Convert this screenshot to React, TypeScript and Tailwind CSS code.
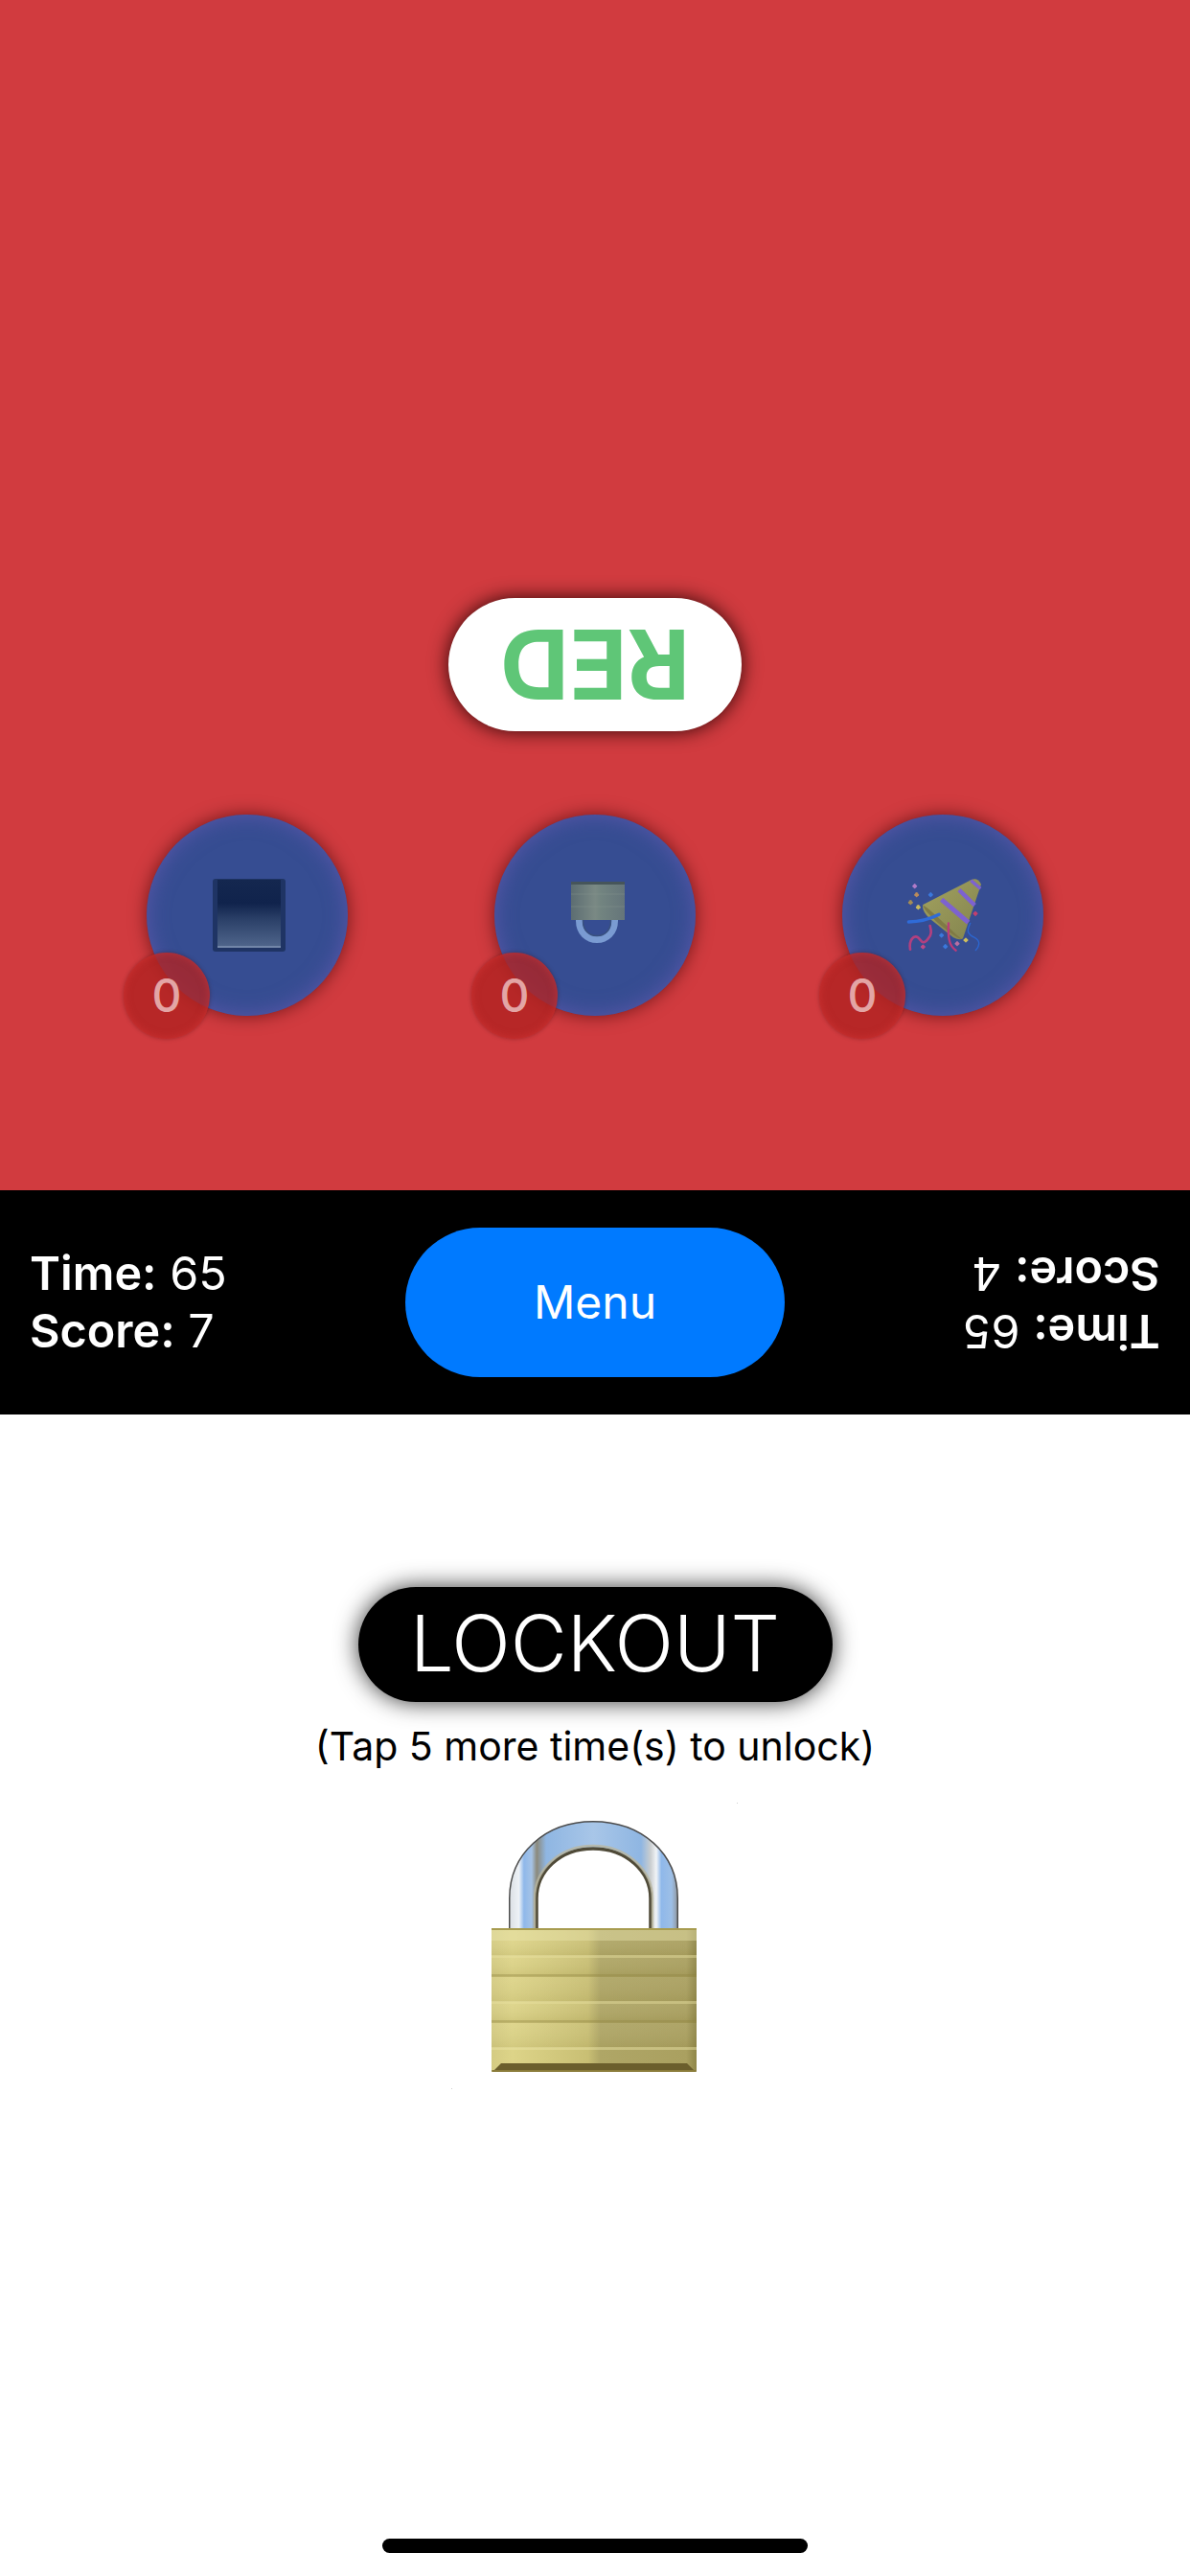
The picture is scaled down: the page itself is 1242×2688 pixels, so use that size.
import React from 'react';

const FONT = "font-['Inter','Liberation_Sans',sans-serif]";

// all three button icons sit in a 100x100 box centred on the circle
function SquareIcon() {
  return (
    <svg width="100" height="100" viewBox="0 0 100 100">
      <defs>
        <linearGradient id="sq" x1="0" y1="0" x2="0" y2="1">
          <stop offset="0" stopColor="#14274f" />
          <stop offset="0.35" stopColor="#10234c" />
          <stop offset="0.6" stopColor="#2c4169" />
          <stop offset="1" stopColor="#4f658b" />
        </linearGradient>
      </defs>
      <rect x="14" y="12" width="76" height="76" rx="3" fill="#1f3464" />
      <rect x="19" y="13" width="66" height="70" fill="url(#sq)" />
      <rect x="19" y="82" width="66" height="2" fill="#7286a8" />
    </svg>
  );
}

function SmallLock() {
  return (
    <svg width="100" height="100" viewBox="0 0 100 100">
      <defs>
        <linearGradient id="sl" x1="0" y1="0" x2="1" y2="0">
          <stop offset="0" stopColor="#5c6d72" />
          <stop offset="0.45" stopColor="#7a8984" />
          <stop offset="0.55" stopColor="#728480" />
          <stop offset="1" stopColor="#65757a" />
        </linearGradient>
      </defs>
      <path d="M33.5 52 V56 C33.5 68 42 75.5 52 75.5 C62 75.5 70.5 68 70.5 56 V52" fill="none" stroke="#7a9bd2" strokeWidth="7" />
      <path d="M37.5 52 V56 C37.5 66 44 71.5 52 71.5 C60 71.5 66.5 66 66.5 56 V52" fill="none" stroke="#39517f" strokeWidth="1.5" />
      <rect x="25" y="15" width="56" height="40" fill="url(#sl)" />
      <rect x="25" y="15" width="56" height="3" fill="#46555a" />
      <path d="M25 28h56M25 41h56" stroke="#8a9891" strokeWidth="1" opacity="0.4" />
    </svg>
  );
}

function PartyPopper() {
  const dots: [number, number, string][] = [
    [74, 74, '#b07bc8'],
    [80, 101, '#b98b5b'],
    [61, 125, '#a58d55'],
    [85, 140, '#c9bb5f'],
    [124, 101, '#3a78dc'],
    [264, 160, '#c3406e'],
    [158, 228, '#3a78dc'],
    [170, 263, '#3a78dc'],
    [207, 254, '#b96da2'],
    [234, 243, '#cebe5e'],
    [100, 264, '#bf4987'],
  ];
  return (
    <svg width="100" height="100" viewBox="12 15 300 300">
      <defs>
        <linearGradient id="pc" x1="0" y1="0" x2="1" y2="1">
          <stop offset="0" stopColor="#a3a25e" />
          <stop offset="1" stopColor="#82834f" />
        </linearGradient>
      </defs>
      <path d="M100 132 L250 55 Q270 45 282 68 L225 238 Q215 245 195 235 L120 175 Q95 150 100 132 Z" fill="url(#pc)" />
      <path d="M250 56 L280 82" stroke="#7d62d0" strokeWidth="10" />
      <path d="M213 86 L262 134" stroke="#7d62d0" strokeWidth="13" />
      <path d="M158 116 L242 188" stroke="#7d62d0" strokeWidth="15" />
      <path d="M100 135 C110 132 190 215 222 240 C205 240 110 165 100 135 Z" fill="#7f7a45" />
      <path d="M55 186 C85 186 120 178 150 163" fill="none" stroke="#2f6bd8" strokeWidth="10" strokeLinecap="round" />
      <path d="M60 272 C55 245 70 225 85 235 C95 245 100 260 115 240 C130 225 125 210 122 198" fill="none" stroke="#b2407f" strokeWidth="8" strokeLinecap="round" />
      <path d="M180 190 C178 230 180 260 203 275" fill="none" stroke="#ba3b7b" strokeWidth="7" strokeLinecap="round" />
      <path d="M248 190 C235 215 240 225 262 235 C280 245 278 260 265 275" fill="none" stroke="#2c66d0" strokeWidth="4" strokeLinecap="round" />
      {dots.map(([x, y, c]) => (
        <rect key={`${x}-${y}`} x={x - 6} y={y - 6} width="12" height="12" rx="2" fill={c} transform={`rotate(45 ${x} ${y})`} />
      ))}
    </svg>
  );
}

function BigLock() {
  const shackle = 'M75 135 V100 C75 62 105 34 148 34 C192 34 222 62 222 100 V135';
  return (
    <svg width="300" height="300" viewBox="0 0 300 300">
      <defs>
        <linearGradient id="sh" gradientUnits="userSpaceOnUse" x1="60" y1="0" x2="237" y2="0">
          <stop offset="0" stopColor="#d9dee3" />
          <stop offset="0.06" stopColor="#eef2f6" />
          <stop offset="0.09" stopColor="#8fb8ea" />
          <stop offset="0.135" stopColor="#a5c3e6" />
          <stop offset="0.165" stopColor="#8c8a7c" />
          <stop offset="0.22" stopColor="#8fb6e2" />
          <stop offset="0.5" stopColor="#a8c6e8" />
          <stop offset="0.78" stopColor="#8fb6e2" />
          <stop offset="0.835" stopColor="#c9cdcf" />
          <stop offset="0.87" stopColor="#f1f4f7" />
          <stop offset="0.9" stopColor="#8fb8ea" />
          <stop offset="0.96" stopColor="#9dbfe6" />
          <stop offset="1" stopColor="#8f9397" />
        </linearGradient>
        <linearGradient id="bd" x1="0" y1="0" x2="1" y2="0">
          <stop offset="0" stopColor="#d4cb82" />
          <stop offset="0.1" stopColor="#ddd488" />
          <stop offset="0.47" stopColor="#c9bf74" />
          <stop offset="0.53" stopColor="#afa666" />
          <stop offset="0.95" stopColor="#aaa060" />
          <stop offset="1" stopColor="#8f8648" />
        </linearGradient>
        <linearGradient id="band" x1="0" y1="0" x2="0" y2="1">
          <stop offset="0" stopColor="#fff" stopOpacity="0.05" />
          <stop offset="1" stopColor="#6f6428" stopOpacity="0.1" />
        </linearGradient>
      </defs>
      <path d={shackle} fill="none" stroke="#4c4c4c" strokeWidth="30" />
      <path d={shackle} fill="none" stroke="url(#sh)" strokeWidth="27" />
      <path d="M89 135 V100 C89 72 113 48 148 48 C183 48 208 72 208 100 V135" fill="none" stroke="#4f4a38" strokeWidth="3.5" />
      <path d="M87 135 V100 C87 70 113 45 148 45 C183 45 210 70 210 100 V135" fill="none" stroke="#b9b6a0" strokeWidth="2.5" opacity="0.8" />
      <rect x="42" y="131" width="214" height="150" rx="2" fill="url(#bd)" />
      <rect x="42" y="133" width="214" height="11" fill="#ece6b4" opacity="0.45" />
      <rect x="42" y="131" width="214" height="2" fill="#a89c50" />
      <rect x="42" y="144" width="214" height="16" fill="url(#band)" />
      <rect x="42" y="162" width="214" height="18" fill="url(#band)" />
      <rect x="42" y="182" width="214" height="26" fill="url(#band)" />
      <rect x="42" y="210" width="214" height="18" fill="url(#band)" />
      <rect x="42" y="230" width="214" height="26" fill="url(#band)" />
      <path d="M42 160.5h214M42 208.5h214M42 256.5h214" stroke="#ece5a8" strokeWidth="3" opacity="0.45" />
      <path d="M42 180.5h214M42 228.5h214" stroke="#8e8340" strokeWidth="2.5" opacity="0.45" />
      <path d="M43 281 L52 272 H246 L255 281 Z" fill="#6b5e2c" />
      <rect x="42" y="279" width="214" height="2" rx="1" fill="#8a7c3a" />
      {/* stray pixels at the image corners */}
      <rect x="298" y="0" width="1" height="1" fill="#cfcfcf" />
      <rect x="0" y="298" width="1" height="1" fill="#cfcfcf" />
    </svg>
  );
}

function Target({ children }: { children: React.ReactNode }) {
  return (
    <div className="relative flex h-[210px] w-[210px] items-center justify-center rounded-full bg-[#364d92] shadow-[inset_0_0_22px_rgba(120,95,190,0.55),0_0_18px_rgba(50,0,0,0.6)]">
      {children}
      <div className="absolute left-[-24px] top-[144px] flex h-[90px] w-[90px] items-center justify-center rounded-full bg-[#b02322]/80 text-[48px] font-medium text-[#e3a5a5] shadow-[inset_0_0_8px_rgba(225,60,60,0.5),0_0_4px_rgba(60,0,0,0.35)]">
        0
      </div>
    </div>
  );
}

function Stats({ time, score, flip }: { time: number; score: number; flip?: boolean }) {
  return (
    <div className={flip ? 'rotate-180 justify-self-end text-[48.5px] leading-[60px] text-white' : 'text-[48.5px] leading-[60px] text-white'}>
      <p><span className="font-semibold">Time:</span> {time}</p>
      <p><span className="font-semibold">Score:</span> {score}</p>
    </div>
  );
}

export default function App() {
  return (
    <div className={`flex h-[2688px] w-[1242px] flex-col overflow-hidden bg-white ${FONT}`}>
      {/* opponent's half */}
      <div className="flex h-[1242px] flex-col items-center justify-end bg-[#d13b3f] pb-[182px]">
        <div className="mb-[87px] flex h-[139px] w-[306px] rotate-180 items-center justify-center rounded-full bg-white text-[100px] font-bold text-[#5fc677] shadow-[0_0_20px_rgba(30,0,0,0.9)]">
          RED
        </div>
        <div className="flex gap-[153px]">
          <Target><SquareIcon /></Target>
          <Target><SmallLock /></Target>
          <Target><PartyPopper /></Target>
        </div>
      </div>

      {/* scores bar */}
      <div className="grid h-[234px] grid-cols-[1fr_396px_1fr] items-center bg-black px-[31px]">
        <Stats time={65} score={7} />
        <div className="flex h-[156px] items-center justify-center rounded-full bg-[#007aff] text-[48px] text-white">
          Menu
        </div>
        <Stats time={65} score={4} flip />
      </div>

      {/* locked half */}
      <div className="flex flex-1 flex-col items-center pt-[180px]">
        <div className="flex h-[120px] w-[495px] items-center justify-center rounded-full bg-black text-[81px] font-[350] text-white shadow-[0_0_24px_rgba(0,0,0,0.8)]">
          LOCKOUT
        </div>
        <p className="mt-[20px] text-[41px] leading-[52px] text-black">(Tap 5 more time(s) to unlock)</p>
        <div className="mt-[33px]">
          <BigLock />
        </div>
        <div className="mt-auto mb-[24px] h-[15px] w-[444px] rounded-full bg-black" />
      </div>
    </div>
  );
}
